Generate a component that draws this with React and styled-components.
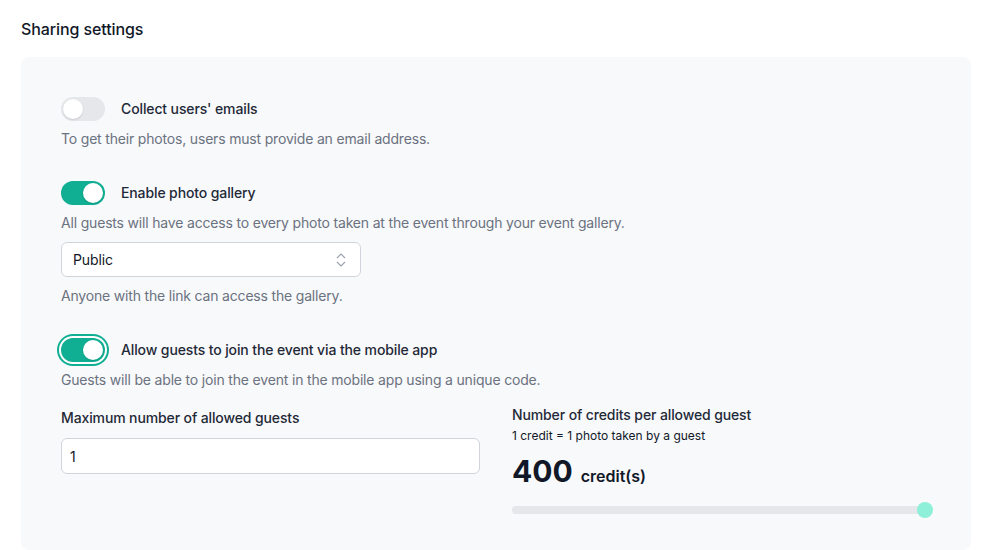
import styled, { createGlobalStyle } from 'styled-components'
import { ChevronsUpDown } from 'lucide-react'

const GlobalStyle = createGlobalStyle`
    body {
        margin: 0;
        background: #ffffff;
        font-family: Inter, "Noto Sans", sans-serif;
        color: #111827;
        -webkit-font-smoothing: antialiased;
    }
`

const Page = styled.div`
    padding: 17px 15px 0 21px;
`

const Title = styled.h2`
    margin: 0;
    font-size: 16px;
    line-height: 24px;
    font-weight: 500;
    letter-spacing: -0.1px;
    color: #111827;
`

const Panel = styled.div`
    margin-top: 16px;
    background: #f8f9fb;
    border-radius: 8px;
    padding: 40px 40px 36px 40px;
    display: flex;
    flex-direction: column;
    gap: 32px;
`

const Section = styled.div`
    display: flex;
    flex-direction: column;
`

const ToggleRow = styled.div`
    display: flex;
    align-items: center;
    gap: 16px;
`

const Switch = styled.div`
    width: 44px;
    height: 24px;
    border-radius: 12px;
    padding: 2px;
    box-sizing: border-box;
    background: ${p => (p.$on ? '#10ae93' : '#e5e7eb')};
    display: flex;
    justify-content: ${p => (p.$on ? 'flex-end' : 'flex-start')};
    box-shadow: ${p => (p.$focus ? '0 0 0 2px #ffffff, 0 0 0 4px #10ae93' : 'none')};
`

const Knob = styled.span`
    width: 20px;
    height: 20px;
    border-radius: 50%;
    background: #ffffff;
    box-shadow: 0 1px 2px rgba(0, 0, 0, 0.12);
`

const Label = styled.span`
    font-size: 14px;
    line-height: 20px;
    font-weight: 500;
    letter-spacing: -0.12px;
    color: #1f2937;
`

const Desc = styled.p`
    margin: ${p => p.$mt || 8}px 0 0 0;
    font-size: 14px;
    line-height: 20px;
    letter-spacing: -0.18px;
    color: #6b7280;
`

const Select = styled.div`
    margin-top: 9px;
    width: 300px;
    height: 35px;
    box-sizing: border-box;
    background: #ffffff;
    border: 1px solid #d1d5db;
    border-radius: 6px;
    padding: 0 10px 0 11px;
    display: flex;
    align-items: center;
    justify-content: space-between;
    font-size: 14px;
    letter-spacing: -0.1px;
    color: #111827;
`

const Grid = styled.div`
    margin-top: 15px;
    display: grid;
    grid-template-columns: 1fr 1fr;
    column-gap: 32px;
`

const Column = styled.div`
    display: flex;
    flex-direction: column;
    padding-top: ${p => p.$pt || 0}px;
`

const Input = styled.div`
    margin-top: 10px;
    height: 36px;
    box-sizing: border-box;
    background: #ffffff;
    border: 1px solid #d1d5db;
    border-radius: 6px;
    padding: 0 8px;
    display: flex;
    align-items: center;
    font-size: 14px;
    color: #111827;
`

const SubLabel = styled.span`
    margin-top: 3px;
    font-size: 12px;
    line-height: 16px;
    color: #111827;
`

const Amount = styled.div`
    margin-top: 9px;
    display: flex;
    align-items: baseline;
    gap: 8px;
`

const Big = styled.span`
    font-size: 30px;
    line-height: 36px;
    font-weight: 700;
    color: #111827;
`

const Unit = styled.span`
    font-size: 16px;
    font-weight: 600;
    color: #111827;
`

const SliderTrack = styled.div`
    position: relative;
    margin-top: 17px;
    height: 8px;
    border-radius: 4px;
    background: #e5e7eb;
`

const Thumb = styled.span`
    position: absolute;
    top: 50%;
    width: 16px;
    height: 16px;
    border-radius: 50%;
    background: #8ff0d9;
    transform: translate(2px, -50%);
`

function Toggle({ on, focus }) {
    return (
        <Switch $on={on} $focus={focus}>
            <Knob />
        </Switch>
    )
}

function App() {
    const credits = 400
    const maxCredits = 400

    return (
        <>
            <GlobalStyle />
            <Page>
                <Title>Sharing settings</Title>
                <Panel>
                    <Section>
                        <ToggleRow>
                            <Toggle on={false} />
                            <Label>Collect users' emails</Label>
                        </ToggleRow>
                        <Desc>To get their photos, users must provide an email address.</Desc>
                    </Section>

                    <Section>
                        <ToggleRow>
                            <Toggle on />
                            <Label>Enable photo gallery</Label>
                        </ToggleRow>
                        <Desc>All guests will have access to every photo taken at the event through your event gallery.</Desc>
                        <Select>
                            <span>Public</span>
                            <ChevronsUpDown size={18} color="#9ca3af" strokeWidth={1.5} />
                        </Select>
                        <Desc $mt={9}>Anyone with the link can access the gallery.</Desc>
                    </Section>

                    <Section>
                        <ToggleRow>
                            <Toggle on focus />
                            <Label>Allow guests to join the event via the mobile app</Label>
                        </ToggleRow>
                        <Desc>Guests will be able to join the event in the mobile app using a unique code.</Desc>
                        <Grid>
                            <Column $pt={3}>
                                <Label>Maximum number of allowed guests</Label>
                                <Input>1</Input>
                            </Column>
                            <Column>
                                <Label>Number of credits per allowed guest</Label>
                                <SubLabel>1 credit = 1 photo taken by a guest</SubLabel>
                                <Amount>
                                    <Big>{credits}</Big>
                                    <Unit>credit(s)</Unit>
                                </Amount>
                                <SliderTrack>
                                    <Thumb style={{ right: `${(1 - credits / maxCredits) * 100}%` }} />
                                </SliderTrack>
                            </Column>
                        </Grid>
                    </Section>
                </Panel>
            </Page>
        </>
    )
}

export default App
